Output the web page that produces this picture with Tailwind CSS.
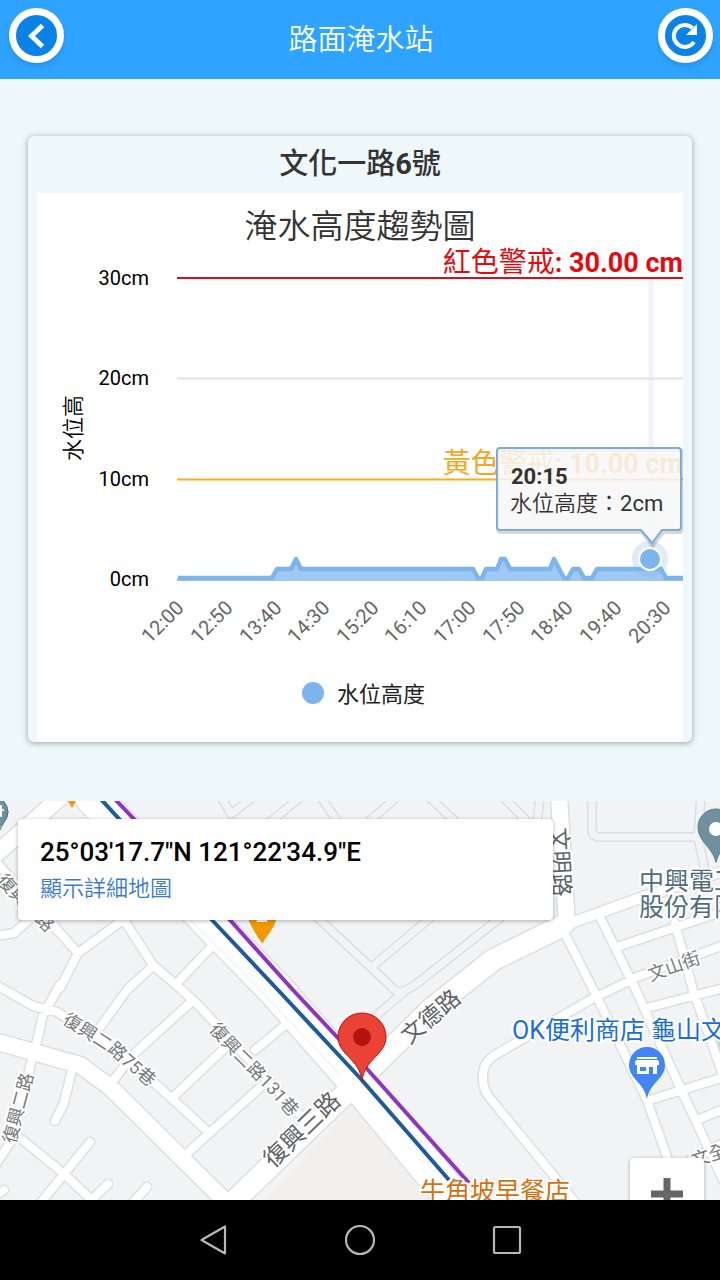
<!DOCTYPE html>
<html lang="zh-Hant">
<head>
<meta charset="utf-8">
<meta name="viewport" content="width=device-width, initial-scale=1">
<title>路面淹水站</title>
<script src="https://cdn.jsdelivr.net/npm/@tailwindcss/browser@4"></script>
</head>
<body class="flex min-h-screen flex-col bg-[#eef7fa] font-['Roboto','Noto_Sans_CJK_TC',sans-serif] text-[#333333]">

<header class="flex h-[79px] items-start justify-between bg-[#2ea3ff] pt-2 pr-[7px] pl-[9px]">
  <button type="button" aria-label="返回" class="flex size-[55px] items-center justify-center rounded-full border-[7px] border-white bg-[#0a83e8] shadow-md">
    <svg viewBox="0 0 42 42" class="size-[42px] shrink-0" fill="none" stroke="#fff" stroke-width="4.8"><path d="M26.500 10.500 15.500 21 26.500 31.500"/></svg>
  </button>
  <h1 class="pt-2 text-[29px] leading-[48px] font-[350] text-white">路面淹水站</h1>
  <button type="button" aria-label="重新整理" class="flex size-[55px] items-center justify-center rounded-full border-[7px] border-white bg-[#0a83e8] shadow-md">
    <svg viewBox="0 0 42 42" class="size-[42px] shrink-0" fill="none" stroke="#fff" stroke-width="4"><path d="M30 27A11 11 0 1 1 28.500 13"/><path d="M33 9V20H22Z" fill="#fff" stroke="none"/></svg>
  </button>
</header>

<main class="flex flex-1 flex-col">
  <section class="mx-7 mt-[57px] mb-[59px] rounded-md bg-[#eef7fa] px-[9px] shadow-[0_1px_6px_rgba(0,0,0,0.35)]">
    <h2 class="h-[57px] text-center text-[29px] leading-[56px] font-medium">文化一路<b class="font-bold">6</b>號</h2>
    <svg viewBox="37 193 646 549" class="block h-auto w-full bg-white" role="img" aria-label="淹水高度趨勢圖">
      <text x="360" y="238" text-anchor="middle" font-size="33" font-weight="350" fill="#333">淹水高度趨勢圖</text>
      <g font-size="20" fill="#000" text-anchor="end">
        <text x="149" y="285">30cm</text><text x="149" y="385">20cm</text><text x="149" y="486">10cm</text><text x="149" y="586">0cm</text>
      </g>
      <text transform="translate(81 428) rotate(-90)" text-anchor="middle" font-size="22" font-weight="350" fill="#000">水位高</text>
      <path d="M651 278V579" stroke="#eff4fb" stroke-width="5"/>
      <path d="M177 378.500H683" stroke="#e2e2e2" stroke-width="2"/>
      <path d="M177 579H683" stroke="#ccd6eb" stroke-width="2"/>
      <path d="M177 278H683" stroke="#d90f14" stroke-width="2"/>
      <path d="M177 479.500H683" stroke="#f5ae1f" stroke-width="2"/>
      <path d="M177 578H272L277 569H291L296 559L301 569H473L478 578H482L486 569H497L501 559H505L510 569H550L554 559L564 578H568L573 569H579L584 578H592L597 569H645L650 559L655 569H661L666 578H683V581H177Z" fill="#9fc8f2"/>
      <path d="M178 578H272L277 569H291L296 559L301 569H473L478 578H482L486 569H497L501 559H505L510 569H550L554 559L564 578H568L573 569H579L584 578H592L597 569H645L650 559L655 569H661L666 578H683" fill="none" stroke="#7cb5ec" stroke-width="4.500" stroke-linejoin="round"/>
      <g font-size="20" fill="#666" text-anchor="end">
        <text transform="translate(185 609) rotate(-45)">12:00</text>
        <text transform="translate(234 609) rotate(-45)">12:50</text>
        <text transform="translate(283 609) rotate(-45)">13:40</text>
        <text transform="translate(331 609) rotate(-45)">14:30</text>
        <text transform="translate(380 609) rotate(-45)">15:20</text>
        <text transform="translate(428 609) rotate(-45)">16:10</text>
        <text transform="translate(477 609) rotate(-45)">17:00</text>
        <text transform="translate(526 609) rotate(-45)">17:50</text>
        <text transform="translate(574 609) rotate(-45)">18:40</text>
        <text transform="translate(623 609) rotate(-45)">19:40</text>
        <text transform="translate(672 609) rotate(-45)">20:30</text>
      </g>
      <g font-size="27" text-anchor="end" font-weight="700">
        <text x="683" y="272" fill="#e60a0e"><tspan font-weight="400" font-size="28">紅色警戒</tspan>: 30.00 cm</text>
        <text x="683" y="473" fill="#f5a623"><tspan font-weight="400" font-size="28">黃色警戒</tspan>: 10.00 cm</text>
      </g>
      <circle cx="313" cy="693" r="11" fill="#7cb5ec"/>
      <text x="337" y="702" font-size="22" fill="#222">水位高度</text>
      <circle cx="650" cy="559" r="18" fill="#7cb5ec" opacity=".25"/>
      <circle cx="650" cy="559" r="11" fill="#7cb5ec" stroke="#fff" stroke-width="2"/>
      <g>
        <path d="M500 448H678Q681 448 681 451V527Q681 530 678 530H662L652 543L641 530H500Q497 530 497 527V451Q497 448 500 448Z" fill="none" stroke="#000" stroke-opacity=".16" stroke-width="4" transform="translate(1 2)"/>
        <path d="M500 448H678Q681 448 681 451V527Q681 530 678 530H662L652 543L641 530H500Q497 530 497 527V451Q497 448 500 448Z" fill="#f7f7f7" fill-opacity=".85" stroke="#7cabdc" stroke-width="2"/>
        <text x="511" y="484" font-size="22" font-weight="700" fill="#333">20:15</text>
        <text x="510" y="511" font-size="22" font-weight="350" fill="#333">水位高度：<tspan font-weight="400">2cm</tspan></text>
      </g>
    </svg>
  </section>

  <section class="relative min-h-[399px] flex-1 overflow-hidden bg-[#f1f3f4]" aria-label="地圖">
    <svg viewBox="0 801 720 399" preserveAspectRatio="xMidYMin slice" class="absolute inset-0 size-full" fill="none" stroke-linecap="round" stroke-linejoin="round">
      <defs>
        <g id="alleys"><path d="M220 795L231 814L252 798M302 796L270 822M320 796L338 822M398 796L366 824M428 796L458 824M502 796L530 824M540 796L537 824M592 796V830Q592 837 600 837H697M701 796L698 838L706 875M430 918L373 966M500 918L424 978Q405 994 396 991L318 918M404 992L385 1008L366 1025"/></g>
        <g id="small"><path d="M60 985L43 1015L36 1045L30 1067L12 1140L-4 1164M60 988L78 953L127 917M78 953L-4 862M-4 936L14 933L30 919M-4 985L33 1006L57 1012L110 1045L157 1085L205 1129M152 967L127 990L101 1026M122 917L153 965L182 990L200 1007L305 1120M213 945L178 982M190 1003L135 1053L108 1087M284 1026L255 1050M226 1047L173 1097M266 1082L183 1157M72 1070L64 1103L55 1121M20 1138L63 1173L98 1206M90 1142L38 1206M108 1184L85 1206M147 1187L130 1206M4 1190L-5 1196M563 930L595 993L647 1100L667 1157L690 1210M600 917L635 988L680 1087L724 1182M617 947L724 911M724 945L637 977L590 1000L543 1027L495 1055Q483 1063 483 1075Q482 1088 489 1097L576 1203M675 923L693 990L724 1078M647 1008L693 996L724 988M650 1100L724 1077M697 1120L724 1109M690 1160L724 1143"/></g>
        <g id="medium"><path d="M-6 1041L37 1053L80 1065L110 1087L236 1212M62 796L-6 856M559 796L567 924"/></g>
        <g id="large"><path d="M227 1208L347 1092L430 1010L493 960L560 927"/></g>
        <path id="lane75" d="M60 1014L85 1029L117 1050L158 1086"/>
        <path id="lane131" d="M209 1020L243 1057L273 1087L300 1118"/>
      </defs>
      <path d="M355 1105L262 1202H430Z" fill="#f2f0ef"/>
      <path d="M710 1042L722 1038V1049L712 1052Z" fill="#b9e4c4"/>
      <use href="#alleys" stroke="#dcdee1" stroke-width="10"/><use href="#alleys" stroke="#f1f3f4" stroke-width="7"/>
      <g stroke="#dddfe2">
        <use href="#small" stroke-width="11"/><use href="#medium" stroke-width="19"/><use href="#large" stroke-width="24"/>
        <path d="M560 927L643 897L724 871" stroke-width="13"/>
        <path d="M92 796L209 921L276 990L362 1088L458 1204" stroke-width="38"/>
      </g>
      <g stroke="#fff">
        <use href="#small" stroke-width="8"/><use href="#medium" stroke-width="16"/><use href="#large" stroke-width="21"/>
        <path d="M560 927L643 897L724 871" stroke-width="10"/>
        <path d="M92 796L209 921L276 990L362 1088L458 1204" stroke-width="35"/>
      </g>
      <path d="M190 920L262 992L340 1075" stroke="#e9eaec" stroke-width="1"/>
      <g stroke-linecap="butt" stroke-width="4">
        <path d="M98 796L212 920L278 990L360 1078L449 1180" stroke="#1f5a9d"/>
        <path d="M112 796L230 920L293 990L368 1070L469 1183" stroke="#8e35bf"/>
      </g>
      <path d="M246 914H278Q275 927 265 939Q263 944 262 943Q251 928 246 914Z" fill="#f29900"/><path d="M256 922L259 918H265L268 922Z" fill="#fff"/>
      <path d="M67 799H77L72 808Z" fill="#f29900"/>
      <circle cx="-8" cy="812" r="16" fill="#71909f" stroke="#546e7a"/><path d="M-2 830L7 818L-4 838Z" fill="#71909f"/><path d="M0 810H3M1 806V816" stroke="#fff" stroke-width="2"/>
      <path d="M716 862C712 846 698 842 698 827A18 18 0 0 1 734 827C734 842 720 846 716 862Z" fill="#71909f" stroke="#5d7e8e"/><circle cx="716" cy="829" r="7" fill="#fff"/>

      <g font-family="Roboto, 'Noto Sans CJK TC', sans-serif" stroke="#fff" stroke-width="4" paint-order="stroke" fill="#74797d" font-size="18" text-anchor="middle" dominant-baseline="central">
        <text transform="translate(13 890) rotate(48)">復興</text>
        <text transform="translate(45 922) rotate(45)">路</text>
        <text><textPath href="#lane75" startOffset="50%">復興二路75巷</textPath></text>
        <text><textPath href="#lane131" startOffset="50%">復興二路131巷</textPath></text>
        <text transform="translate(18 1108) rotate(-75)">復興二路</text>
        <text transform="translate(674 966) rotate(-20)">文山街</text>
        <text transform="translate(709 1155) rotate(-18)">文全</text>
        <g font-size="23" fill="#5f6468">
          <text transform="translate(302 1130) rotate(-44)" font-size="24">復興三路</text>
          <text transform="translate(431 1017) rotate(-40)">文德路</text>
          <text transform="translate(560 862) rotate(87)">文明路</text>
        </g>
      </g>
      <g font-family="Roboto, 'Noto Sans CJK TC', sans-serif" stroke="#fff" stroke-width="4" paint-order="stroke" font-size="25">
        <g fill="#4e6d7c"><text x="639" y="890">中興電工</text><text x="639" y="916">股份有限</text></g>
        <text x="512" y="1039" fill="#1a6dde">OK便利商店 龜山文</text>
        <text x="420" y="1200" fill="#d56f0c">牛角坡早餐店</text>
      </g>
      <path d="M362 1081C360 1059 338 1055 338 1037A24 24 0 0 1 386 1037C386 1055 364 1059 362 1081Z" fill="#ea4335" stroke="#b31412" stroke-width="1"/>
      <circle cx="362" cy="1037" r="9" fill="#b31412"/>
      <path d="M647 1099C644 1082 629 1079 629 1065A18 18 0 0 1 665 1065C665 1079 650 1082 647 1099Z" fill="#4285f4"/>
      <path d="M637 1057H657V1059H637ZM635 1062L636 1060H658L659 1062V1065H657V1074H653V1067H649V1074H637V1065H635ZM640 1067V1071H646V1067Z" fill="#fff" fill-rule="evenodd"/>
    </svg>

    <div class="absolute top-[18px] left-[18px] h-[101px] w-[535px] max-w-[90%] rounded-sm bg-white px-[22px] pt-4 shadow-[0_1px_4px_rgba(0,0,0,0.3)]">
      <h3 class="text-[26px] leading-[34px] font-medium text-black">25°03'17.7"N 121°22'34.9"E</h3>
      <a href="#" class="mt-1 block text-[22px] leading-8 font-[350] text-[#3a7bd0]">顯示詳細地圖</a>
    </div>
    <button type="button" aria-label="放大" class="absolute top-[357px] right-4 flex h-[74px] w-[74px] justify-center rounded-sm bg-white pt-5 shadow-[0_1px_4px_rgba(0,0,0,0.3)]">
      <svg viewBox="0 0 32 32" class="size-8" fill="#666"><path d="M12.500 0H19.500V12.500H32V19.500H19.500V32H12.500V19.500H0V12.500H12.500Z"/></svg>
    </button>
  </section>
</main>

<nav class="flex h-20 items-center justify-center gap-[115px] bg-black" aria-label="系統導覽">
  <button type="button" aria-label="上一頁"><svg viewBox="0 0 32 32" class="size-8" fill="none" stroke="#b8b8b8" stroke-width="2.200" stroke-linejoin="round"><path d="M4.500 16 28 2.500V29.500Z"/></svg></button>
  <button type="button" aria-label="主畫面"><svg viewBox="0 0 32 32" class="size-8" fill="none" stroke="#b8b8b8" stroke-width="2.200"><circle cx="16" cy="16" r="14"/></svg></button>
  <button type="button" aria-label="最近使用"><svg viewBox="0 0 32 32" class="size-8" fill="none" stroke="#b8b8b8" stroke-width="2.200"><rect x="3" y="3" width="26" height="26" rx="1.500"/></svg></button>
</nav>
</body>
</html>
